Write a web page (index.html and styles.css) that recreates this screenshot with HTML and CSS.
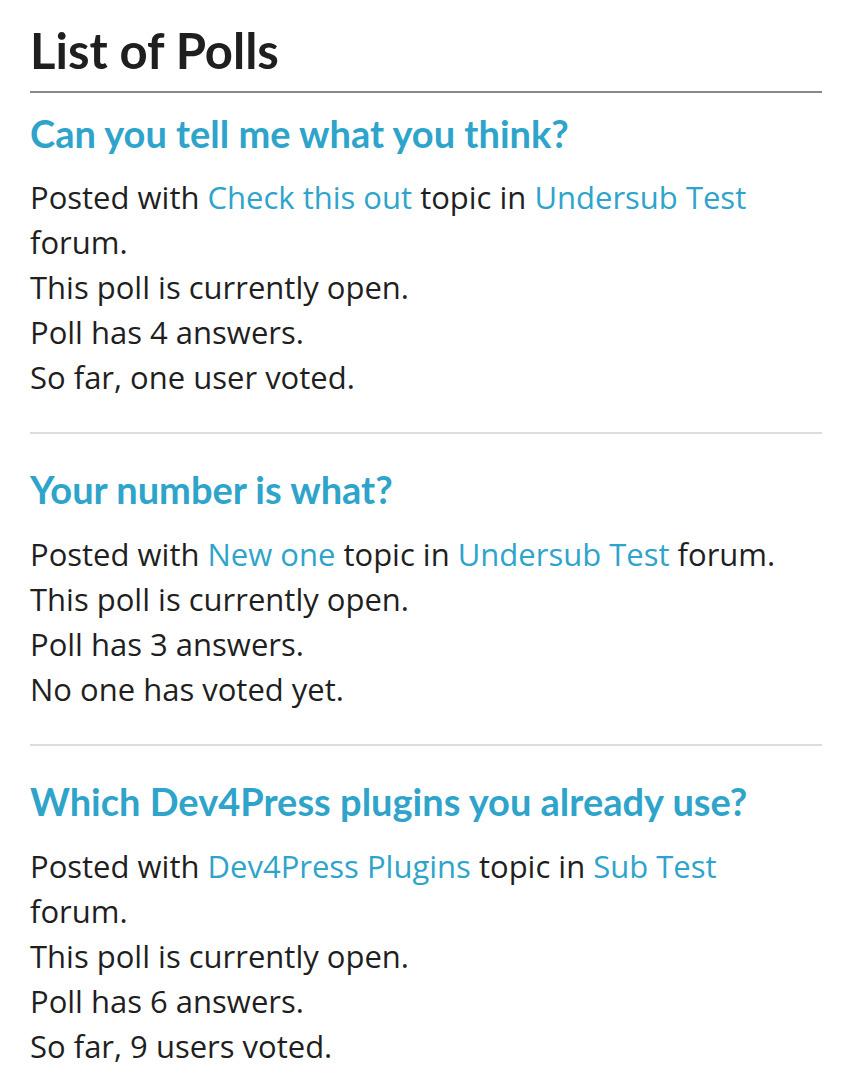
FILE: index.html
```html
<!DOCTYPE html>
<html lang="en">
<head>
    <meta charset="UTF-8">
    <meta name="viewport" content="width=device-width, initial-scale=1.0">
    <title>List of Polls</title>
    <link rel="stylesheet" href="styles.css">
</head>
<body>
    <div class="container">
        <h1 class="page-title">List of Polls</h1>

        <div class="poll">
            <h2 class="poll-title"><a href="#">Can you tell me what you think?</a></h2>
            <p class="poll-info">
                Posted with <a href="#">Check this out</a> topic in <a href="#">Undersub Test</a> forum.<br>
                This poll is currently open.<br>
                Poll has 4 answers.<br>
                So far, one user voted.
            </p>
        </div>

        <div class="poll">
            <h2 class="poll-title"><a href="#">Your number is what?</a></h2>
            <p class="poll-info">
                Posted with <a href="#">New one</a> topic in <a href="#">Undersub Test</a> forum.<br>
                This poll is currently open.<br>
                Poll has 3 answers.<br>
                No one has voted yet.
            </p>
        </div>

        <div class="poll">
            <h2 class="poll-title"><a href="#">Which Dev4Press plugins you already use?</a></h2>
            <p class="poll-info">
                Posted with <a href="#">Dev4Press Plugins</a> topic in <a href="#">Sub Test</a> forum.<br>
                This poll is currently open.<br>
                Poll has 6 answers.<br>
                So far, 9 users voted.
            </p>
        </div>
    </div>
</body>
</html>
```

FILE: styles.css
```css
body {
    font-family: "Open Sans", "Noto Sans", sans-serif;
    margin: 0;
    padding: 0 28px 0 30px;
    background: #fff;
    color: #1f1f1f;
}
.container {
    max-width: 792px;
}
a {
    color: #2fa4cb;
    text-decoration: none;
}
.page-title {
    font-family: Lato, "Open Sans", sans-serif;
    font-size: 49px;
    font-weight: 700;
    line-height: 1.2;
    margin: 21px 0 18px;
    padding-bottom: 11px;
    border-bottom: 2px solid #888;
}
.poll {
    margin-bottom: 33px;
    padding-bottom: 32px;
    border-bottom: 2px solid #ddd;
}
.poll:last-child {
    border-bottom: none;
}
.poll-title {
    font-family: Lato, "Open Sans", sans-serif;
    font-size: 38px;
    font-weight: 700;
    line-height: 1.2;
    margin: 0 0 19px;
}
.poll-info {
    font-size: 31px;
    line-height: 45px;
    margin: 0;
    padding-right: 8px;
}
```
